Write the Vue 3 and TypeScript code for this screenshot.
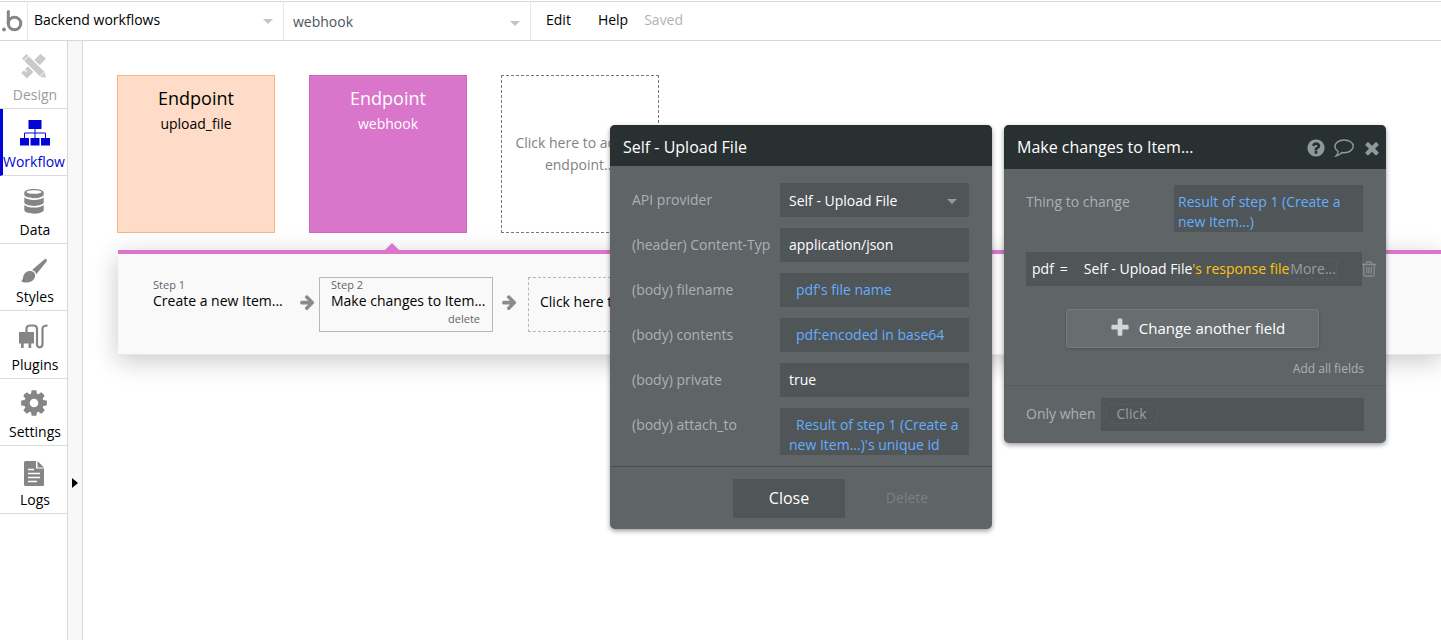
<script setup lang="ts">
import { ref } from 'vue'

interface NavItem {
  id: string
  label: string
  state?: 'active' | 'disabled'
}

interface Field {
  id: string
  label: string
  kind: 'select' | 'text' | 'expression'
  value: string
}

const navItems: NavItem[] = [
  { id: 'design', label: 'Design', state: 'disabled' },
  { id: 'workflow', label: 'Workflow', state: 'active' },
  { id: 'data', label: 'Data' },
  { id: 'styles', label: 'Styles' },
  { id: 'plugins', label: 'Plugins' },
  { id: 'settings', label: 'Settings' },
  { id: 'logs', label: 'Logs' },
]

const fields = ref<Field[]>([
  { id: 'provider', label: 'API provider', kind: 'select', value: 'Self - Upload File' },
  { id: 'content-type', label: '(header) Content-Typ', kind: 'text', value: 'application/json' },
  { id: 'filename', label: '(body) filename', kind: 'expression', value: "pdf's file name" },
  { id: 'contents', label: '(body) contents', kind: 'expression', value: 'pdf:encoded in base64' },
  { id: 'private', label: '(body) private', kind: 'text', value: 'true' },
  { id: 'attach', label: '(body) attach_to', kind: 'expression', value: "Result of step 1 (Create a new Item...)'s unique id" },
])

const page = ref('Backend workflows')
const endpoint = ref('webhook')

const arrowPath =
  'M1600 960q0 54-37 91l-651 651q-39 37-91 37-51 0-90-37l-75-75q-38-38-38-91t38-91l293-293h-704q-52 0-84.500-37.500t-32.500-90.500v-128q0-53 32.500-90.500t84.500-37.500h704l-293-294q-38-36-38-90t38-90l75-75q38-38 90-38 53 0 91 38l651 651q37 35 37 90z'
</script>

<template>
  <div class="app">
    <header class="topbar">
      <a class="logo" href="#" aria-label="Home">
        <svg width="27" height="38" viewBox="0 2 27 38" fill="none" stroke="#858585" stroke-width="3">
          <circle cx="14.500" cy="23.500" r="6.300" />
          <path d="M8.300 11.500v12" stroke-linecap="round" />
          <circle cx="4" cy="29.500" r="1.900" fill="#858585" stroke="none" />
        </svg>
      </a>
      <div class="picker">
        <select v-model="page" aria-label="Page">
          <option>Backend workflows</option>
        </select>
        <span class="caret"></span>
      </div>
      <div class="picker picker-endpoint">
        <select v-model="endpoint" aria-label="Endpoint">
          <option>webhook</option>
        </select>
        <span class="caret"></span>
      </div>
      <nav class="menu">
        <button type="button">Edit</button>
        <button type="button">Help</button>
        <span class="saved">Saved</span>
      </nav>
    </header>

    <div class="body">
      <nav class="sidebar">
        <a v-for="item in navItems" :key="item.id" href="#" class="nav-item" :class="[item.state, item.id]">
          <svg v-if="item.id === 'design'" width="26" height="26" viewBox="0 0 26 26" fill="currentColor">
            <path d="M.3 20 3 17.300l2 2 1-1-2-2L7 13.300l2 2 1-1-2-2L19.500 .8l5.500 5L6 25.500z" />
            <path d="M0 5.500 5.500 0 24.500 19l1.300 6.800L19 24.500z" stroke="#fff" stroke-width="1.400" />
            <path d="M2.500 8 8 2.500M18.500 24l5.500-5.500" stroke="#fff" stroke-width="1" />
          </svg>
          <svg v-else-if="item.id === 'workflow'" width="30" height="26" viewBox="0 0 30 26">
            <path d="M8.500 0h13v9h-13zM0 18h9v7.500H0zM10.500 18h9v7.500h-9zM21 18h9v7.500h-9z" fill="currentColor" />
            <path d="M15 9v9M4.500 18v-5h21v5" fill="none" stroke="currentColor" />
          </svg>
          <svg v-else-if="item.id === 'data'" width="20" height="25" viewBox="0 0 20 25" fill="currentColor">
            <path fill-rule="evenodd" d="M10 0c5.500 0 9.700 1.600 9.700 3.600v2c0 2-4.300 3.700-9.700 3.700S.3 7.600.3 5.600v-2C.3 1.600 4.500 0 10 0zm0 1.200c-4.500 0-7.500.8-7.500 1.800S5.500 4.800 10 4.800s7.500-.8 7.500-1.800-3-1.800-7.500-1.800z" />
            <path d="M.3 8.300c1.800 1.700 5.500 2.600 9.700 2.600s7.900-.9 9.700-2.600v5c0 2-4.300 3.600-9.700 3.600S.3 15.300.3 13.300z" />
            <path d="M.3 16c1.800 1.700 5.500 2.600 9.700 2.600s7.900-.9 9.700-2.600v5c0 2-4.300 3.700-9.700 3.700S.3 23 .3 21z" />
          </svg>
          <svg v-else-if="item.id === 'styles'" width="26" height="24" viewBox="0 0 26 24" fill="currentColor">
            <path d="M25.500.4c.8.700.3 1.700-.1 2.300L15.300 15.200c-.5-2-2-3.600-4.200-4.200L23 .8c.8-.6 1.800-1 2.500-.4z" />
            <path d="M9.800 12c2.700.3 4.500 2.300 4.300 4.700-.3 4-4.200 6.800-8.600 6.800-2.300 0-4.400-.7-5.400-1.600 1.600-.5 1.700-1.700 2-3.600.600-4 3.700-6.700 7.700-6.300z" />
          </svg>
          <svg v-else-if="item.id === 'plugins'" width="29" height="25" viewBox="0 0 29 25">
            <path d="M0 8h15v11.500H0zM2 19h2.700v5H2zM9.500 19h2.700v5H9.500z" fill="currentColor" />
            <path d="M7.500 8V5q0-3.500 3.500-3.500h3.500Q18 1.500 18 5v15q0 3.300 2.700 3.300T23.500 20V5Q23.500 1.500 28.500 1.500" fill="none" stroke="currentColor" stroke-width="2.200" />
          </svg>
          <svg v-else-if="item.id === 'settings'" width="30" height="30" viewBox="0 0 1792 1792" fill="currentColor">
            <path d="M1152 896q0-106-75-181t-181-75-181 75-75 181 75 181 181 75 181-75 75-181zm512-109v222q0 12-8 23t-20 13l-185 28q-19 54-39 91 35 50 107 138 10 12 10 25t-9 23q-27 37-99 108t-94 71q-12 0-26-9l-138-108q-44 23-91 38-16 136-29 186-7 28-36 28h-222q-14 0-24.500-8.500t-11.500-21.500l-28-184q-49-16-90-37l-141 107q-10 9-25 9-14 0-25-11-126-114-165-168-7-10-7-23 0-12 8-23 15-21 51-66.500t54-70.500q-27-50-41-99l-183-27q-13-2-21-12.500t-8-23.500v-222q0-12 8-23t19-13l186-28q14-46 39-92-40-57-107-138-10-12-10-24 0-10 9-23 26-36 98.500-107.500t94.500-71.500q13 0 26 10l138 107q44-23 91-38 16-136 29-186 7-28 36-28h222q14 0 24.500 8.500t11.500 21.500l28 184q49 16 90 37l142-107q9-9 24-9 13 0 25 10 129 119 165 170 7 8 7 22 0 12-8 23-15 21-51 66.500t-54 70.500q26 50 41 98l183 28q13 2 21 12.500t8 23.500z" />
          </svg>
          <svg v-else width="20" height="25" viewBox="0 0 20 25">
            <path d="M1.500 0H12v7.500h8V24q0 1-1 1H1.500q-1.500 0-1.500-1.500v-22Q0 0 1.500 0zM13.500 0 20 6.500h-6.500z" fill="currentColor" />
            <path d="M4 8.500h6M4 12.500h12M4 16.500h12M4 20.500h9" stroke="#fff" stroke-width="1.400" />
          </svg>
          <span>{{ item.label }}</span>
        </a>
      </nav>

      <div class="gutter">
        <button type="button" class="expand" aria-label="Expand panel"></button>
      </div>

      <main class="canvas">
        <div class="tiles">
          <button type="button" class="tile tile-peach">
            <span class="tile-title">Endpoint</span>
            <span>upload_file</span>
          </button>
          <button type="button" class="tile tile-pink">
            <span class="tile-title">Endpoint</span>
            <span>webhook</span>
          </button>
          <button type="button" class="tile tile-new">Click here to add an endpoint...</button>
        </div>

        <section class="steps">
          <span class="pointer"></span>
          <button type="button" class="step step-first">
            <span class="step-num">Step 1</span>
            <span>Create a new Item...</span>
          </button>
          <svg class="arrow" width="17" height="18" viewBox="0 0 1792 1792"><path :d="arrowPath" fill="#8b8b8b" /></svg>
          <div class="step step-selected">
            <span class="step-num">Step 2</span>
            <span>Make changes to Item...</span>
            <button type="button" class="step-delete">delete</button>
          </div>
          <svg class="arrow" width="17" height="18" viewBox="0 0 1792 1792"><path :d="arrowPath" fill="#8b8b8b" /></svg>
          <button type="button" class="step step-new">Click here to add an action...</button>
        </section>
      </main>
    </div>

    <form class="window window-api" @submit.prevent>
      <h2 class="window-head">Self - Upload File</h2>
      <div class="fields">
        <div v-for="field in fields" :key="field.id" class="field">
          <label :for="field.id">{{ field.label }}</label>
          <div v-if="field.kind === 'select'" class="select-box">
            <select :id="field.id" v-model="field.value" class="control">
              <option>Self - Upload File</option>
            </select>
            <span class="caret"></span>
          </div>
          <input v-else-if="field.kind === 'text'" :id="field.id" v-model="field.value" type="text" class="control" />
          <button v-else :id="field.id" type="button" class="control expression indented">{{ field.value }}</button>
        </div>
      </div>
      <footer class="window-foot">
        <button type="button" class="close">Close</button>
        <button type="button" class="delete">Delete</button>
      </footer>
    </form>

    <form class="window window-changes" @submit.prevent>
      <div class="window-head">
        <h2>Make changes to Item...</h2>
        <button type="button" aria-label="Help">
          <svg width="20" height="20" viewBox="0 0 1792 1792" fill="currentColor">
            <path d="M1024 1376v-192q0-14-9-23t-23-9h-192q-14 0-23 9t-9 23v192q0 14 9 23t23 9h192q14 0 23-9t9-23zm256-672q0-88-55.500-163t-138.500-116-170-41q-243 0-371 213-15 24 8 42l132 100q7 6 19 6 16 0 25-12 53-68 86-92 34-24 86-24 48 0 85.500 26t37.500 59q0 38-20 61t-68 45q-63 28-115.500 86.500t-52.500 125.500v36q0 14 9 23t23 9h192q14 0 23-9t9-23q0-19 21.500-49.500t54.500-49.500q32-18 49-28.500t46-35 44.500-48 28-60.500 12.500-81zm384 192q0 209-103 385.500t-279.500 279.500-385.500 103-385.500-103-279.500-279.500-103-385.500 103-385.500 279.500-279.500 385.500-103 385.500 103 279.500 279.500 103 385.500z" />
          </svg>
        </button>
        <button type="button" aria-label="Comment">
          <svg width="20" height="18" viewBox="0 0 20 18" fill="none" stroke="currentColor" stroke-width="1.400">
            <path d="M10.200 1C15.300 1 19.200 3.700 19.200 7.300s-3.900 6.400-9 6.400c-.8 0-1.500-.1-2.200-.2-1.500 1.700-3.500 3-6 3.500 1.300-1.300 2-2.800 2.200-4.500C2.300 11.300 1 9.500 1 7.300 1 3.700 5.100 1 10.200 1z" />
          </svg>
        </button>
        <button type="button" aria-label="Close">
          <svg width="20" height="20" viewBox="0 0 1792 1792" fill="currentColor">
            <path d="M1490 1322q0 40-28 68l-136 136q-28 28-68 28t-68-28l-294-294-294 294q-28 28-68 28t-68-28l-136-136q-28-28-28-68t28-68l294-294-294-294q-28-28-28-68t28-68l136-136q28-28 68-28t68 28l294 294 294-294q28-28 68-28t68 28l136 136q28 28 28 68t-28 68l-294 294 294 294q28 28 28 68z" />
          </svg>
        </button>
      </div>
      <div class="thing">
        <label for="thing">Thing to change</label>
        <button id="thing" type="button" class="control expression">Result of step 1 (Create a new Item...)</button>
      </div>
      <div class="assign">
        <div class="assign-box">
          <span>pdf</span>
          <span class="equals">=</span>
          <button type="button" class="assign-value">Self - Upload File<span class="prop">'s response file</span></button>
          <button type="button" class="chip">More...</button>
        </div>
        <button type="button" class="trash" aria-label="Remove field">
          <svg width="14" height="16" viewBox="0 0 14 16" fill="none" stroke="currentColor" stroke-width="1.300">
            <path d="M0 3.500h14M4 3.500 5 1h4l1 2.500M1.800 3.500v10q0 1.500 1.200 1.500h8q1.200 0 1.200-1.500v-10M4.700 6v6.500M7 6v6.500M9.300 6v6.500" />
          </svg>
        </button>
      </div>
      <button type="button" class="add-field">
        <svg width="22" height="22" viewBox="0 0 1792 1792" fill="#d3d5d6">
          <path d="M1600 736v192q0 40-28 68t-68 28h-416v416q0 40-28 68t-68 28h-192q-40 0-68-28t-28-68v-416h-416q-40 0-68-28t-28-68v-192q0-40 28-68t68-28h416v-416q0-40 28-68t68-28h192q40 0 68 28t28 68v416h416q40 0 68 28t28 68z" />
        </svg>
        Change another field
      </button>
      <button type="button" class="add-all">Add all fields</button>
      <div class="condition">
        <label for="only-when">Only when</label>
        <div class="condition-box">
          <button id="only-when" type="button" class="chip chip-wide">Click</button>
        </div>
      </div>
    </form>
  </div>
</template>

<style>
body {
  margin: 0;
  overflow: hidden;
}
</style>

<style scoped>
.app,
.app * {
  box-sizing: border-box;
}

.app {
  position: relative;
  display: flex;
  flex-direction: column;
  min-height: 100vh;
  background: #fff;
  color: #000;
  font: 14px/20px "Open Sans", "Noto Sans", sans-serif;
}

button,
select,
input {
  margin: 0;
  padding: 0;
  border: 0;
  border-radius: 0;
  background: none;
  color: inherit;
  font: inherit;
  appearance: none;
  outline: 0;
}

svg {
  display: block;
  flex: none;
}

h2 {
  margin: 0;
  font-size: 16px;
  font-weight: 400;
}

.caret {
  position: absolute;
  right: 10px;
  top: 18px;
  border: 5px solid transparent;
  border-top-color: #bcc6cf;
  border-bottom: 0;
  pointer-events: none;
}

.topbar {
  display: flex;
  height: 41px;
  border-top: 1px solid #fff;
  border-bottom: 1px solid #d8d8d8;
  box-shadow: inset 0 1px #d8d8d8;
}

.logo {
  padding-top: 1px;
  border-right: 1px solid #e8e8e8;
}

.picker {
  position: relative;
  width: 256px;
  border-right: 1px solid #e8e8e8;
}

.picker select {
  width: 100%;
  height: 37px;
  padding-left: 6px;
}

.picker-endpoint {
  width: 247px;
  color: #4b545c;
}

.picker-endpoint select {
  height: 41px;
  padding-left: 9px;
}

.picker-endpoint .caret {
  top: 20px;
}

.menu {
  display: flex;
  align-items: center;
  height: 37px;
  padding-left: 15px;
}

.menu button {
  margin-right: 27px;
}

.menu button + button {
  margin-right: 16px;
}

.saved {
  color: #b3b3b3;
}

.body {
  flex: 1;
  display: flex;
}

.sidebar {
  display: grid;
  grid-template-rows: repeat(7, 1fr);
  align-self: flex-start;
  width: 67px;
  height: 473px;
}

.nav-item {
  display: flex;
  flex-direction: column;
  align-items: center;
  justify-content: flex-end;
  padding-bottom: 3px;
  border-bottom: 1px solid #dcdcdc;
  color: #000;
  text-decoration: none;
  white-space: nowrap;
}

.nav-item svg {
  margin-bottom: 6px;
  color: #858585;
}

.nav-item span {
  padding-left: 2px;
}

.styles svg,
.settings svg,
.logs svg {
  margin-bottom: 4px;
}

.nav-item.disabled {
  color: #9c9c9c;
}

.nav-item.disabled svg {
  color: #cacaca;
}

.nav-item.active {
  border-left: 3px solid #0205d3;
  color: #0205d3;
}

.nav-item.active svg {
  color: #0205d3;
}

.nav-item.active span {
  padding: 0 3px 0 0;
}

.gutter {
  width: 16px;
  padding: 437px 0 0 4px;
  border: solid #d8d8d8;
  border-width: 0 1px;
  background: #f8f8f8;
}

.expand {
  display: block;
  border: 5px solid transparent;
  border-left: 6px solid #000;
  border-right: 0;
}

.canvas {
  flex: 1;
  min-width: 0;
  padding: 34px 0 0 34px;
  overflow: hidden;
}

.tiles {
  display: flex;
  gap: 34px;
}

.tile {
  display: flex;
  flex-direction: column;
  align-items: center;
  width: 158px;
  height: 158px;
  padding-top: 12px;
  border: 1px solid;
}

.tile-title {
  margin-bottom: 6px;
  font-size: 18px;
}

.tile-peach {
  border-color: #f8b286;
  background: #fedcc7;
}

.tile-pink {
  border-color: #c968bd;
  background: #d975cb;
  color: #fff;
}

.tile-new {
  display: block;
  padding: 0 12px;
  border: 1px dashed #777;
  color: #828282;
  line-height: 22px;
}

.steps {
  position: relative;
  display: flex;
  align-items: center;
  height: 105px;
  margin: 17px 0 0 1px;
  padding: 4px 0 3px 23px;
  border-top: 4px solid #d975cb;
  border-bottom: 1px solid #e6e6e6;
  background: #f9f9f9;
  box-shadow: 0 6px 24px rgba(0, 0, 0, 0.22);
  white-space: nowrap;
}

.pointer {
  position: absolute;
  left: 266px;
  top: -11px;
  border: 8px solid transparent;
  border-top: 0;
  border-bottom-color: #d975cb;
}

.step {
  display: flex;
  flex: none;
  flex-direction: column;
  align-items: flex-start;
  height: 55px;
  padding: 0 6px 0 11px;
  border: 1px solid transparent;
}

.step-first {
  width: 150px;
}

.step-num {
  margin-bottom: -1px;
  color: #5e6468;
  font-size: 11px;
  line-height: 14px;
}

.step-selected {
  width: 174px;
  border-color: #aebabf;
}

.step-delete {
  align-self: flex-end;
  padding-right: 6px;
  color: #5e6468;
  font-size: 11px;
  line-height: 16px;
}

.step-new {
  justify-content: center;
  margin-left: 7px;
  padding-bottom: 6px;
  border: 1px dashed #aebabf;
}

.arrow {
  margin: 0 3px 6px 8px;
}

.window {
  position: absolute;
  top: 125px;
  width: 382px;
  border-radius: 5px;
  background: #5f6467;
  box-shadow: 0 2px 5px rgba(0, 0, 0, 0.4);
  color: #fff;
}

.window-api {
  left: 610px;
}

.window-changes {
  left: 1004px;
}

.window-head {
  display: flex;
  align-items: center;
  height: 44px;
  padding: 0 4px 0 13px;
  border-radius: 5px 5px 0 0;
  background: #293032;
}

.window-api .window-head {
  height: 41px;
  padding-top: 3px;
}

.window-head > h2 {
  flex: 1;
}

.window-head button {
  margin-left: 8px;
  padding-top: 2px;
  color: #8f999c;
}

.window label {
  color: #abb2b5;
}

.fields {
  display: flex;
  flex-direction: column;
  gap: 11px;
  padding: 17px 23px 11px 22px;
}

.field {
  display: flex;
  justify-content: space-between;
}

.field label {
  padding-top: 7px;
  white-space: nowrap;
}

.select-box {
  position: relative;
}

.select-box .caret {
  right: 12px;
  top: 16px;
  border-top-color: #92999d;
}

.control {
  display: block;
  width: 189px;
  height: 34px;
  padding: 0 9px;
  background: #505558;
}

input.control {
  padding-bottom: 2px;
}

select.control {
  padding-top: 2px;
}

.expression {
  display: flex;
  align-items: flex-start;
  height: auto;
  padding: 7px 4px 0;
  min-height: 34px;
  color: #64aefd;
  text-align: left;
}

.indented {
  padding: 7px 9px 0;
  text-indent: 7px;
}

.window-foot {
  display: flex;
  padding: 12px 23px 11px 123px;
  border-top: 1px solid #4a4f51;
}

.close {
  width: 112px;
  height: 39px;
  padding-bottom: 2px;
  background: #505558;
  font-size: 16px;
}

.delete {
  flex: 1;
  padding-bottom: 2px;
  color: #7b8082;
}

.thing {
  display: flex;
  justify-content: space-between;
  padding: 16px 23px 0 22px;
}

.thing label {
  padding-top: 7px;
}

.assign {
  display: flex;
  align-items: center;
  margin: 20px 10px 0 22px;
}

.assign-box {
  display: flex;
  align-items: center;
  flex: 1;
  height: 34px;
  padding-left: 6px;
  background: #505558;
  white-space: nowrap;
}

.equals {
  margin: 0 16px 0 6px;
}

.prop {
  color: #ffc20c;
}

.chip {
  border: 1px dashed #5a5f62;
  border-radius: 4px;
  color: #999ea0;
  line-height: 18px;
}

.trash {
  color: #868c8f;
}

.add-field {
  display: flex;
  align-items: center;
  justify-content: center;
  gap: 8px;
  width: 253px;
  height: 39px;
  margin: 23px 0 0 62px;
  padding: 0 0 2px 9px;
  border: 1px solid #74797c;
  border-radius: 2px;
  background: #686d70;
  box-shadow: 0 1px 3px rgba(0, 0, 0, 0.2);
  font-size: 15px;
}

.add-all {
  display: block;
  margin: 11px 22px 6px auto;
  color: #abb2b5;
  font-size: 12px;
}

.condition {
  display: flex;
  align-items: center;
  gap: 5px;
  padding: 12px 22px 12px 22px;
  border-top: 1px solid #565b5e;
}

.condition label {
  padding-bottom: 2px;
}

.condition-box {
  display: flex;
  align-items: center;
  flex: 1;
  height: 33px;
  padding: 0 0 2px 5px;
  background: #505558;
}

.chip-wide {
  padding: 0 10px;
}
</style>
